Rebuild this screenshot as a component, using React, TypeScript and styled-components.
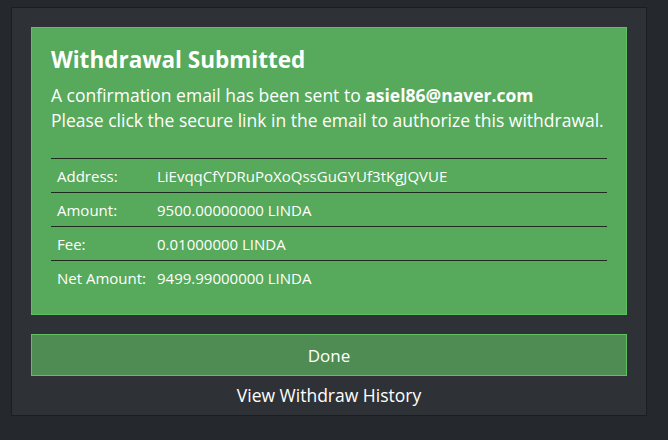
import React from 'react';
import styled, {createGlobalStyle} from 'styled-components';

const GlobalStyle = createGlobalStyle`
  html, body {
    margin: 0;
    padding: 0;
    background: #25282d;
    font-family: "Open Sans", "Noto Sans", sans-serif;
    color: #ffffff;
  }
  #root {
    min-height: 440px;
  }
`;

const rows = [
  {label: 'Address:', value: 'LiEvqqCfYDRuPoXoQssGuGYUf3tKgJQVUE'},
  {label: 'Amount:', value: '9500.00000000 LINDA'},
  {label: 'Fee:', value: '0.01000000 LINDA'},
  {label: 'Net Amount:', value: '9499.99000000 LINDA'},
];

export default function App(): JSX.Element {
  return (
    <>
      <GlobalStyle />
      <Page>
        <Panel>
          <SuccessBox>
            <Title>Withdrawal Submitted</Title>
            <Message>
              A confirmation email has been sent to <strong>asiel86@naver.com</strong>
              <br />
              Please click the secure link in the email to authorize this withdrawal.
            </Message>
            <DetailTable>
              <tbody>
                {rows.map((row) => (
                  <tr key={row.label}>
                    <Label>{row.label}</Label>
                    <Value>{row.value}</Value>
                  </tr>
                ))}
              </tbody>
            </DetailTable>
          </SuccessBox>
          <DoneButton type="button">Done</DoneButton>
          <HistoryLink href="#">View Withdraw History</HistoryLink>
        </Panel>
      </Page>
    </>
  );
}

const Page = styled.div`
  padding: 7px 0 0 11px;
`;
const Panel = styled.section`
  display: flex;
  flex-direction: column;
  width: 636px;
  box-sizing: border-box;
  padding: 19px 19px 0;
  background: #2e3237;
  border: 1px solid #1b1d20;
`;
const SuccessBox = styled.div`
  background: #57a95b;
  border: 1px solid #5fc15f;
  padding: 17px 19px 20px;
`;
const Title = styled.h2`
  margin: 0 0 8px;
  font-size: 22.5px;
  font-weight: 700;
  line-height: 30px;
`;
const Message = styled.p`
  margin: 0 0 25px;
  font-size: 17.5px;
  line-height: 25px;

  strong {
    font-weight: 700;
  }
`;
const DetailTable = styled.table`
  width: 100%;
  border-collapse: collapse;
  font-size: 15px;

  tr {
    border-top: 1px solid #1d2a1e;
  }
`;
const Label = styled.td`
  width: 100px;
  padding: 0 0 0 6px;
  height: 33px;
  white-space: nowrap;
`;
const Value = styled.td`
  padding: 0;
`;
const DoneButton = styled.button`
  margin-top: 19px;
  height: 42px;
  background: #4e8c53;
  border: 1px solid #5fc15f;
  color: #ffffff;
  font-family: inherit;
  font-size: 17px;
  cursor: pointer;
`;
const HistoryLink = styled.a`
  align-self: center;
  padding: 7px 0 8px;
  color: #ffffff;
  font-size: 17.5px;
  line-height: 24px;
  text-decoration: none;
`;
